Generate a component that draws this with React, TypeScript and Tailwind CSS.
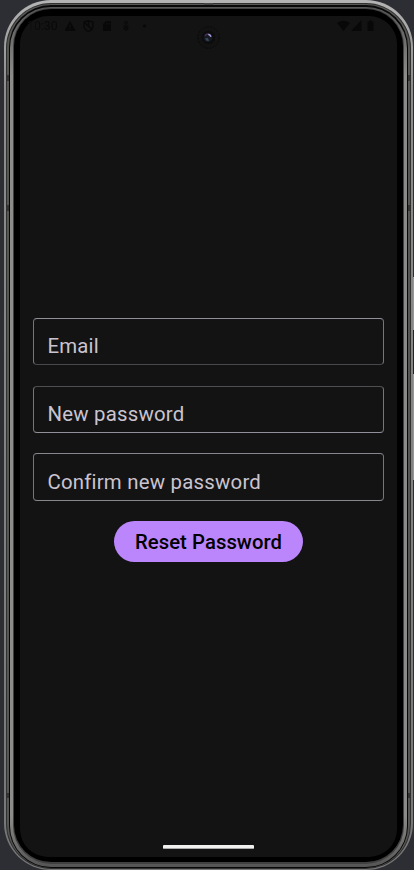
import React from "react";

function Field({ label, edges }: { label: string; edges: string }) {
  return (
    <div className={`flex w-full items-center rounded-[4px] border border-x-[#777579] pl-[13.4px] ${edges}`}>
      <span className="whitespace-nowrap text-[20.4px] leading-6 tracking-[0.22px] text-[#cac4d0]">{label}</span>
    </div>
  );
}

function StatusBar() {
  return (
    <header className="flex h-5 w-full items-center justify-between pl-[7px] pr-[22px] text-[#080808]">
      <div className="flex items-center">
        <span className="w-[38px] bg-linear-to-r from-[#111] to-[#080808] to-35% bg-clip-text text-[12.3px] leading-4 text-transparent">10:30</span>
        <svg width="90" height="14" viewBox="0 0 90 14" fill="currentColor">
          <path fillRule="evenodd" d="M5 2 10.7 12H-.7ZM4.4 5.5v3h1.2v-3Zm0 4v1.2h1.2V9.5Z" />
          <path d="M19 3.2 23.5 1.8 28 3.2V7q0 3.5-4.5 5.5Q19 10.5 19 7ZM19 3l8.5 8M23.5 2v4" fill="none" stroke="currentColor" strokeWidth="1.3" />
          <path fillRule="evenodd" d="M38 5 41 2h5v10h-8Zm2.8-1v1.6h.8V4Zm1.6 0v1.6h.8V4Zm1.6 0v1.6h.8V4Z" />
          <g fill="none" stroke="currentColor">
            <circle cx="61" cy="3.8" r="1.4" />
            <path d="M58.5 6.3 61 7.5l2.5-1.2M59.5 7.5 58.8 10 61 11.5 63.2 10l-.7-2.5" />
            <circle cx="61" cy="9" r="1" />
          </g>
          <circle cx="79.5" cy="7" r="1.6" />
        </svg>
      </div>
      <svg width="38" height="14" viewBox="0 0 38 14" fill="currentColor">
        <path d="M0 4Q6.5-.5 13 4L6.5 12ZM14 12 24.5 1v11ZM30.5 2.5h2V1.2h2v1.3h2V12h-6Z" />
      </svg>
    </header>
  );
}

function Camera() {
  return (
    <svg className="absolute left-[197px] top-[26px]" width="23" height="23" viewBox="0 0 23 23">
      <circle cx="11.5" cy="11.5" r="10.8" fill="#121212" stroke="#0b0b0b" strokeDasharray="2 1.5" />
      <circle cx="11.5" cy="11.5" r="7.5" fill="#0c0c0c" stroke="#181818" strokeWidth=".7" />
      <circle cx="11" cy="11.7" r="4.4" fill="#171921" />
      <path d="M8 12.5q1 3 4 2.5l-1-3Z" fill="#354957" />
      <path d="M8 10q1-2 3-2" stroke="#41315b" strokeWidth="1.3" fill="none" />
      <path d="M11.3 8.3q2 .6 2.7 2.5" stroke="#aaa0dc" strokeWidth="1.5" fill="none" />
    </svg>
  );
}

function ResetScreen() {
  return (
    <main className="flex h-full flex-col items-center rounded-[28px] bg-[#131313] px-[13px] pb-2">
      <div className="-mx-[13px] self-stretch">
        <StatusBar />
      </div>
      <form className="flex w-full flex-1 flex-col items-center justify-center gap-5 pb-px">
        <Field label="Email" edges="mb-px h-[47px] pt-2 border-t-[#938f99] border-b-[#49474b]" />
        <Field label="New password" edges="h-[47px] pt-2 border-t-[#504e53] border-b-[#938f99]" />
        <Field label="Confirm new password" edges="h-12 pt-[9px] border-y-[#88858c]" />
        <button type="button" className="flex h-[41px] w-[189px] items-center justify-center rounded-full bg-[#bb86fc] pt-px text-[20.3px] font-medium leading-6 tracking-[0.06px] text-black">
          Reset Password
        </button>
      </form>
      <div className="h-1 w-[91px] rounded-[1px] border-b border-[#aaa] bg-[#f1f1ef]" />
    </main>
  );
}

export default function App() {
  return (
    <div className="relative flex h-[870px] w-[414px] overflow-hidden bg-[#2d2e33] pl-1 font-['Roboto',sans-serif]">
      <div className="h-full flex-1 rounded-[47px] bg-linear-to-b from-[#b4b4b4] via-[#8e8e8c] via-10% to-[#777] px-[2px] pb-px pt-[3px]">
        <div className="h-full rounded-[45px] bg-[#303030] p-px">
          <div className="h-full rounded-[44px] bg-[linear-gradient(to_bottom,#565856_71px,#343434_71px,#343434_77px,#565856_77px,#565856_201px,#343434_201px,#343434_207px,#565856_207px,#565856_789px,#343434_789px,#343434_794px,#565856_794px)] px-[2px] pt-px">
            <div className="h-full rounded-[42px] bg-[#080808] px-px pb-px pt-[2px]">
              <div className="h-full rounded-[41px] bg-[linear-gradient(to_bottom,#555_0%,#8b8b89_8%,#8b8b89_94%,#555_100%)] px-[3px] pb-[3px] pt-px">
                <div className="h-full rounded-[38px] bg-[#404040] px-px pb-[2px] pt-px">
                  <div className="h-full rounded-[37px] bg-black px-[6px] pb-[5px] pt-[7px]">
                    <ResetScreen />
                  </div>
                </div>
              </div>
            </div>
          </div>
        </div>
      </div>
      <div className="flex w-px flex-col pt-[277px]">
        <div className="h-[53px] bg-[#9b9893]" />
        <div className="h-11 bg-[#222]" />
        <div className="h-[106px] bg-[#9b9893]" />
      </div>
      <Camera />
      <div className="absolute left-[204px] top-[3px] h-[2px] w-[9px] bg-[#444]" />
    </div>
  );
}
